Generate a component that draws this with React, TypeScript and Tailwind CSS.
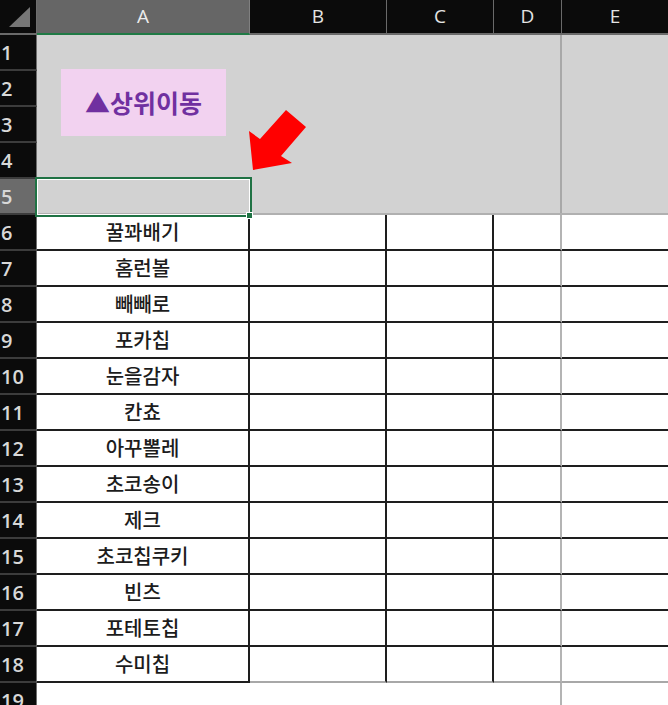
import React from "react";

const items = [
  "꿀꽈배기",
  "홈런볼",
  "빼빼로",
  "포카칩",
  "눈을감자",
  "칸쵸",
  "아꾸뽈레",
  "초코송이",
  "제크",
  "초코칩쿠키",
  "빈츠",
  "포테토칩",
  "수미칩",
];

const numFont = { fontFamily: '"Open Sans", "Noto Sans", sans-serif' };
const krFont = { fontFamily: '"Noto Sans CJK KR", "Noto Sans", sans-serif' };

function RowHeader({ n, selected }: { n: number; selected?: boolean }) {
  return (
    <div
      className={
        "w-[37px] shrink-0 h-full flex items-center pl-[1px] pt-[1px] border-b-2 border-b-[#3c3c3c] border-r border-r-[#6e6e6e] text-[20px] font-semibold leading-none text-[#d8d8d8] " +
        (selected ? "bg-[#6b6b6b]" : "bg-[#0b0b0b]")
      }
      style={numFont}
    >
      {n}
    </div>
  );
}

export default function App() {
  const grayRows = [1, 2, 3, 4, 5];
  return (
    <div className="relative w-[668px] h-[705px] overflow-hidden bg-white select-none">
      {/* column header */}
      <div className="flex h-[35px] bg-[#0b0b0b] border-b-2 border-b-[#6a6a6a]" style={numFont}>
        <div className="w-[37px] shrink-0 h-full border-r border-r-[#6e6e6e] flex items-end justify-end pr-[4px] pb-[5px]">
          <svg width="24" height="22" viewBox="0 0 24 22">
            <polygon points="22,1 22,21 1,21" fill="#767676" />
          </svg>
        </div>
        <div className="w-[213px] shrink-0 h-[35px] -mb-[2px] bg-[#666666] border-b-2 border-b-[#1f7a45] border-r border-r-[#808080] flex items-center justify-center text-[19px] text-[#ececec]">
          A
        </div>
        <div className="w-[137px] shrink-0 h-full border-r border-r-[#6a6a6a] flex items-center justify-center text-[19px] text-[#e4e4e4]">
          B
        </div>
        <div className="w-[107px] shrink-0 h-full border-r border-r-[#6a6a6a] flex items-center justify-center text-[19px] text-[#e4e4e4]">
          C
        </div>
        <div className="w-[68px] shrink-0 h-full border-r border-r-[#6a6a6a] flex items-center justify-center text-[19px] text-[#e4e4e4]">
          D
        </div>
        <div className="flex-1 h-full flex items-center justify-center text-[19px] text-[#e4e4e4]">E</div>
      </div>

      {/* rows 1-5: gray area */}
      {grayRows.map((n) => (
        <div key={n} className="flex h-[36px]">
          <RowHeader n={n} selected={n === 5} />
          <div
            className={
              "flex-1 flex h-full bg-[#d2d2d2] " + (n === 5 ? "border-b-2 border-b-[#b0b0b0]" : "")
            }
          >
            <div className="w-[213px] shrink-0" />
            <div className="w-[137px] shrink-0" />
            <div className="w-[107px] shrink-0" />
            <div className="w-[68px] shrink-0 border-r-2 border-r-[#a8a8a8]" />
            <div className="flex-1" />
          </div>
        </div>
      ))}

      {/* rows 6-18 */}
      {items.map((t, i) => {
        const last = i === items.length - 1;
        const dark = "border-b-2 border-b-[#1e1e1e]";
        const light = "border-b-2 border-b-[#a8a8a8]";
        return (
          <div key={t} className="flex h-[36px]">
            <RowHeader n={i + 6} />
            <div
              className={
                "w-[213px] shrink-0 h-full flex items-center justify-center border-r-2 border-r-[#1e1e1e] text-[20px] font-medium text-[#1c1c1c] " +
                dark
              }
              style={krFont}
            >
              {t}
            </div>
            <div className={"w-[137px] shrink-0 h-full border-r-2 border-r-[#1e1e1e] " + (last ? light : dark)} />
            <div className={"w-[107px] shrink-0 h-full border-r-2 border-r-[#1e1e1e] " + (last ? light : dark)} />
            <div className={"w-[68px] shrink-0 h-full border-r-2 border-r-[#b4b4b4] " + (last ? light : dark)} />
            <div className={"flex-1 h-full " + (last ? light : dark)} />
          </div>
        );
      })}

      {/* row 19 */}
      <div className="flex h-[36px]">
        <RowHeader n={19} />
        <div className="w-[213px] shrink-0 h-full" />
        <div className="w-[137px] shrink-0 h-full" />
        <div className="w-[107px] shrink-0 h-full" />
        <div className="w-[68px] shrink-0 h-full border-r-2 border-r-[#b4b4b4]" />
        <div className="flex-1 h-full" />
      </div>

      {/* floating shape button */}
      <div
        className="absolute left-[61px] top-[69px] w-[165px] h-[67px] bg-[#f2d2f0] flex items-center justify-center text-[25px] font-bold text-[#7030a0] leading-none"
        style={krFont}
      >
        ▲상위이동
      </div>

      {/* selection on A5 */}
      <div className="absolute left-[35px] top-[177px] w-[217px] h-[40px] border-2 border-[#1f7244] shadow-[inset_0_0_0_1px_#ffffff]" />
      <div className="absolute left-[246px] top-[212px] w-[7px] h-[7px] bg-[#1f7244] border border-white" />

      {/* red arrow */}
      <svg className="absolute left-0 top-0 pointer-events-none" width="668" height="705">
        <polygon
          points="253,170 249,131 260,139 286,110 306,127 281,156 292,163"
          fill="#ff0000"
        />
      </svg>
    </div>
  );
}
